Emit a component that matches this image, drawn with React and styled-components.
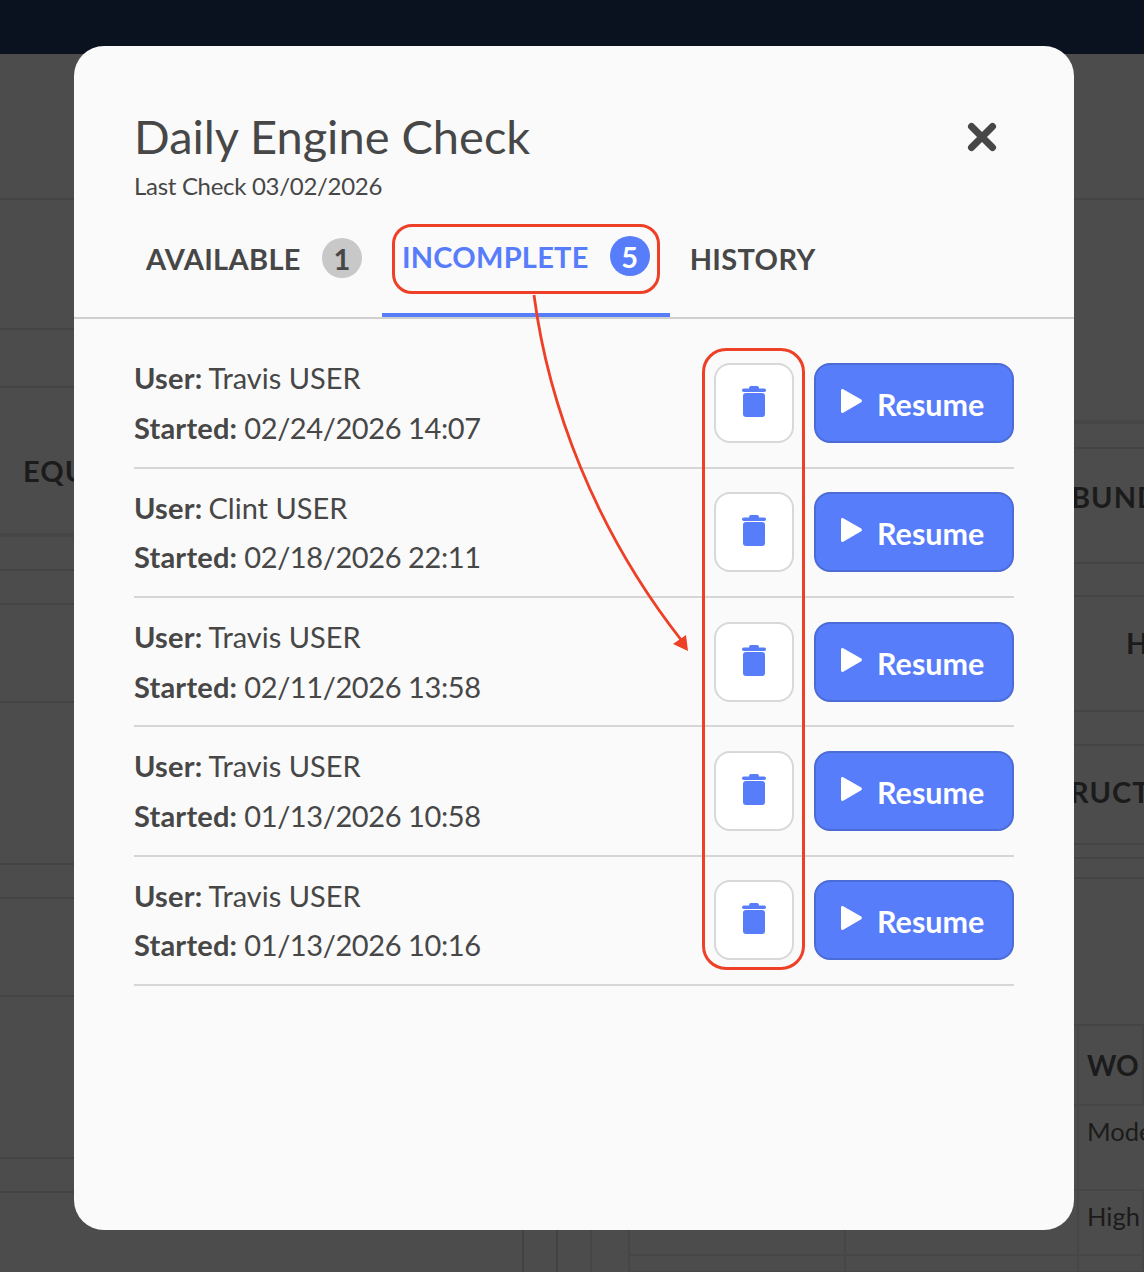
import React from 'react';
import styled, { createGlobalStyle } from 'styled-components';

const rows = [
  { user: 'Travis USER', started: '02/24/2026 14:07', height: 130 },
  { user: 'Clint USER', started: '02/18/2026 22:11', height: 129, nudge: true },
  { user: 'Travis USER', started: '02/11/2026 13:58', height: 129 },
  { user: 'Travis USER', started: '01/13/2026 10:58', height: 130 },
  { user: 'Travis USER', started: '01/13/2026 10:16', height: 129, nudge: true },
];

// page behind the dimmed overlay
const leftBands = [
  { height: 146 },
  { height: 130 },
  { height: 58 },
  { height: 149, thick: true, label: 'EQU', indent: 23, drop: 20 },
  { height: 34 },
  { height: 34 },
  { height: 98 },
  { height: 162 },
  { height: 34 },
  { height: 98 },
  { height: 162 },
  { height: 34 },
];

const rightBands = [
  { height: 146 },
  { height: 224, thick: true },
  { height: 25 },
  { height: 115, label: 'BUNDLE', indent: 499, lift: 18 },
  { height: 33 },
  { height: 115, label: 'HOURS', indent: 554, lift: 22 },
  { height: 34 },
  { height: 99, label: 'RUCTIONS', indent: 498, lift: 6 },
  { height: 14 },
  { height: 20 },
  { height: 147 },
];

const workRows = [
  { height: 80, text: 'WO', heading: true },
  { height: 85, text: 'Model' },
  { height: 65, text: 'High' },
  { height: 17, text: '' },
];

const CloseIcon = () => (
  <svg width="30" height="30" viewBox="0 0 30 30" aria-hidden="true">
    <path d="M4.500 4.500L25.500 25.500M25.500 4.500L4.500 25.500" fill="none" stroke="currentColor" strokeWidth="7" strokeLinecap="round" />
  </svg>
);

const TrashIcon = () => (
  <svg width="24" height="31" viewBox="0 0 24 31" aria-hidden="true">
    <rect x="7" y="0" width="10" height="4" rx="2" fill="currentColor" />
    <rect x="0" y="2.500" width="24" height="3.500" rx="1.750" fill="currentColor" />
    <rect x="1" y="7" width="22" height="24" rx="3" fill="currentColor" />
  </svg>
);

const PlayIcon = () => (
  <svg width="21" height="24" viewBox="0 0 21 24" aria-hidden="true">
    <path d="M0 1.500C0 .4 1.200-.3 2.200.3l18 10.300c.9.6.9 2.100 0 2.700l-18 10.400C1.200 24.300 0 23.600 0 22.500z" fill="currentColor" />
  </svg>
);

const App = () => (
  <>
    <GlobalStyle />
    <Page>
      <TopBar />
      <Backdrop>
        <BandColumn>
          {leftBands.map((band, i) => (
            <Band key={i} $height={band.height} $thick={band.thick} $indent={band.indent} $drop={band.drop}>
              {band.label && <BandLabel>{band.label}</BandLabel>}
            </Band>
          ))}
          <SideFooter>
            <SideCell />
            <SideCell />
          </SideFooter>
        </BandColumn>
        <BandColumn>
          {rightBands.map((band, i) => (
            <Band key={i} $height={band.height} $thick={band.thick} $indent={band.indent} $lift={band.lift}>
              {band.label && <BandLabel>{band.label}</BandLabel>}
            </Band>
          ))}
          {workRows.map((row) => (
            <WorkRow key={row.height} $height={row.height}>
              <WorkCell />
              <WorkCell />
              <WorkCell $lined />
              <WorkCell $lined />
              <WorkCell $lined $heading={row.heading}>{row.text}</WorkCell>
            </WorkRow>
          ))}
        </BandColumn>
      </Backdrop>

      <Modal>
        <Header>
          <div>
            <Title>Daily Engine Check</Title>
            <Subtitle>Last Check 03/02/2026</Subtitle>
          </div>
          <CloseButton aria-label="Close"><CloseIcon /></CloseButton>
        </Header>

        <Tabs>
          <Tab>
            AVAILABLE <Count>1</Count>
          </Tab>
          <Tab $active>
            INCOMPLETE <Count $active>5</Count>
          </Tab>
          <Tab>HISTORY</Tab>
        </Tabs>

        <List>
          {rows.map((row, i) => (
            <Row key={i} $height={row.height} $nudge={row.nudge}>
              <Details $nudge={row.nudge}>
                <Line><strong>User:</strong> <UserName>{row.user}</UserName></Line>
                <Line><strong>Started:</strong> {row.started}</Line>
              </Details>
              <DeleteButton aria-label="Delete"><TrashIcon /></DeleteButton>
              <ResumeButton><PlayIcon /> Resume</ResumeButton>
            </Row>
          ))}
        </List>

        <TabCallout />
        <ButtonsCallout />
        <Arrow viewBox="0 0 170 370" aria-hidden="true">
          <path d="M2 2C16 110 62 236 150 348" fill="none" stroke="#ee4027" strokeWidth="2.800" />
          <path d="M156 358L141 351L154 342Z" fill="#ee4027" />
        </Arrow>
      </Modal>
    </Page>
  </>
);

const GlobalStyle = createGlobalStyle`
  html, body {
    margin: 0;
    padding: 0;
    background: #4c4c4c;
  }

  * {
    box-sizing: border-box;
  }

  body {
    font-family: Lato, "Liberation Sans", sans-serif;
    color: #474747;
  }
`;

const Page = styled.div`
  position: relative;
  width: 1144px;
  height: 1272px;
  overflow: hidden;
  background: #4c4c4c;
`;

const TopBar = styled.div`
  height: 54px;
  background: #0a1220;
`;

const Backdrop = styled.div`
  display: grid;
  grid-template-columns: 572px 572px;
`;

const BandColumn = styled.div`
  display: flex;
  flex-direction: column;
  min-width: 0;
`;

const Band = styled.div`
  flex: none;
  height: ${({ $height }) => $height}px;
  border-bottom: ${({ $thick }) => ($thick ? '4px solid #464646' : '2px solid #444')};
  display: flex;
  align-items: center;
  padding-left: ${({ $indent }) => $indent || 0}px;
  padding-top: ${({ $drop }) => $drop || 0}px;
  padding-bottom: ${({ $lift }) => $lift || 0}px;
  white-space: nowrap;
`;

const BandLabel = styled.span`
  font-size: 29px;
  font-weight: 700;
  letter-spacing: 1px;
  color: #1b1b1b;
`;

const SideFooter = styled.div`
  display: flex;
  height: 80px;
  padding-left: 490px;
`;

const SideCell = styled.div`
  width: 34px;
  border-right: 2px solid #424242;
`;

const WorkRow = styled.div`
  display: grid;
  flex: none;
  grid-template-columns: 20px 38px 216px 233px 1fr;
  height: ${({ $height }) => $height}px;
`;

const WorkCell = styled.div`
  padding: 8px 0 0 8px;
  border-right: 2px solid #464646;
  border-bottom: ${({ $lined }) => ($lined ? '2px solid #464646' : '0')};
  font-size: ${({ $heading }) => ($heading ? '28px' : '25.500px')};
  font-weight: ${({ $heading }) => ($heading ? 700 : 400)};
  line-height: ${({ $heading }) => ($heading ? '62px' : '35px')};
  color: #1b1b1b;
  white-space: nowrap;
`;

const Modal = styled.section`
  position: absolute;
  top: 46px;
  left: 74px;
  width: 1000px;
  height: 1184px;
  border-radius: 30px;
  background: #fafafa;
`;

const Header = styled.header`
  display: flex;
  justify-content: space-between;
  align-items: flex-start;
  padding: 61px 77px 0 60px;
`;

const Title = styled.h1`
  margin: 0;
  font-size: 47px;
  line-height: 58px;
  font-weight: 400;
  color: #474747;
`;

const Subtitle = styled.p`
  margin: 8px 0 0;
  font-size: 24px;
  line-height: 26px;
  color: #474747;
  letter-spacing: -0.3px;
`;

const CloseButton = styled.button`
  display: flex;
  margin: 15px 0 0;
  padding: 0;
  border: 0;
  background: none;
  color: #474747;
`;

const Tabs = styled.nav`
  display: flex;
  align-items: stretch;
  height: 120px;
  padding-left: 60px;
  border-bottom: 2px solid #cfcfcf;
`;

const Tab = styled.div`
  display: flex;
  align-items: center;
  gap: 21px;
  padding: 0 ${({ $active }) => ($active ? '20px' : '12px')};
  margin-right: 8px;
  border-bottom: ${({ $active }) => ($active ? '4px solid #587dfa' : '0')};
  font-size: 29px;
  font-weight: 700;
  letter-spacing: ${({ $active }) => ($active ? '0.25px' : '0.35px')};
  color: ${({ $active }) => ($active ? '#587dfa' : '#474747')};
`;

const Count = styled.span`
  display: inline-flex;
  align-items: center;
  justify-content: center;
  width: 40px;
  height: 40px;
  border-radius: 50%;
  background: ${({ $active }) => ($active ? '#587dfa' : '#c8c8c8')};
  color: ${({ $active }) => ($active ? '#fff' : '#474747')};
  font-size: 29px;
  font-weight: 700;
  letter-spacing: 0;
`;

const List = styled.div`
  margin: 0 60px;
  padding-top: 20px;
`;

const Row = styled.article`
  display: flex;
  align-items: center;
  gap: 20px;
  height: ${({ $height }) => $height}px;
  padding-bottom: ${({ $nudge }) => ($nudge ? '2px' : '0')};
  border-bottom: 2px solid #d6d6d6;
`;

const Details = styled.div`
  flex: 1;
  display: flex;
  flex-direction: column;
  gap: ${({ $nudge }) => ($nudge ? '13px' : '14px')};
  padding-top: ${({ $nudge }) => ($nudge ? '1px' : '0')};
`;

const Line = styled.div`
  font-size: 29px;
  line-height: 36px;
  letter-spacing: -0.4px;
  color: #474747;

  strong {
    font-weight: 700;
    letter-spacing: 0.2px;
  }
`;

const UserName = styled.span`
  margin-left: -1px;
  letter-spacing: 0;
`;

const DeleteButton = styled.button`
  display: flex;
  align-items: center;
  justify-content: center;
  width: 80px;
  height: 80px;
  padding: 0 0 3px;
  border: 2px solid #d8d8d8;
  border-radius: 16px;
  background: #fff;
  color: #587dfa;
`;

const ResumeButton = styled.button`
  display: flex;
  align-items: center;
  gap: 15px;
  width: 200px;
  height: 80px;
  padding: 2px 0 0 25px;
  border: 2px solid #4b6cd6;
  border-radius: 16px;
  background: #587dfa;
  color: #fff;
  font-family: inherit;
  font-size: 30.500px;
  font-weight: 700;

  svg {
    margin-bottom: 6px;
  }
`;

const TabCallout = styled.div`
  position: absolute;
  top: 178px;
  left: 318px;
  width: 268px;
  height: 70px;
  border: 3px solid #ee4027;
  border-radius: 20px;
`;

const ButtonsCallout = styled.div`
  position: absolute;
  top: 302px;
  left: 628px;
  width: 103px;
  height: 622px;
  border: 3px solid #ee4027;
  border-radius: 24px;
`;

const Arrow = styled.svg`
  position: absolute;
  top: 247px;
  left: 458px;
  width: 170px;
  height: 370px;
`;

export default App;
